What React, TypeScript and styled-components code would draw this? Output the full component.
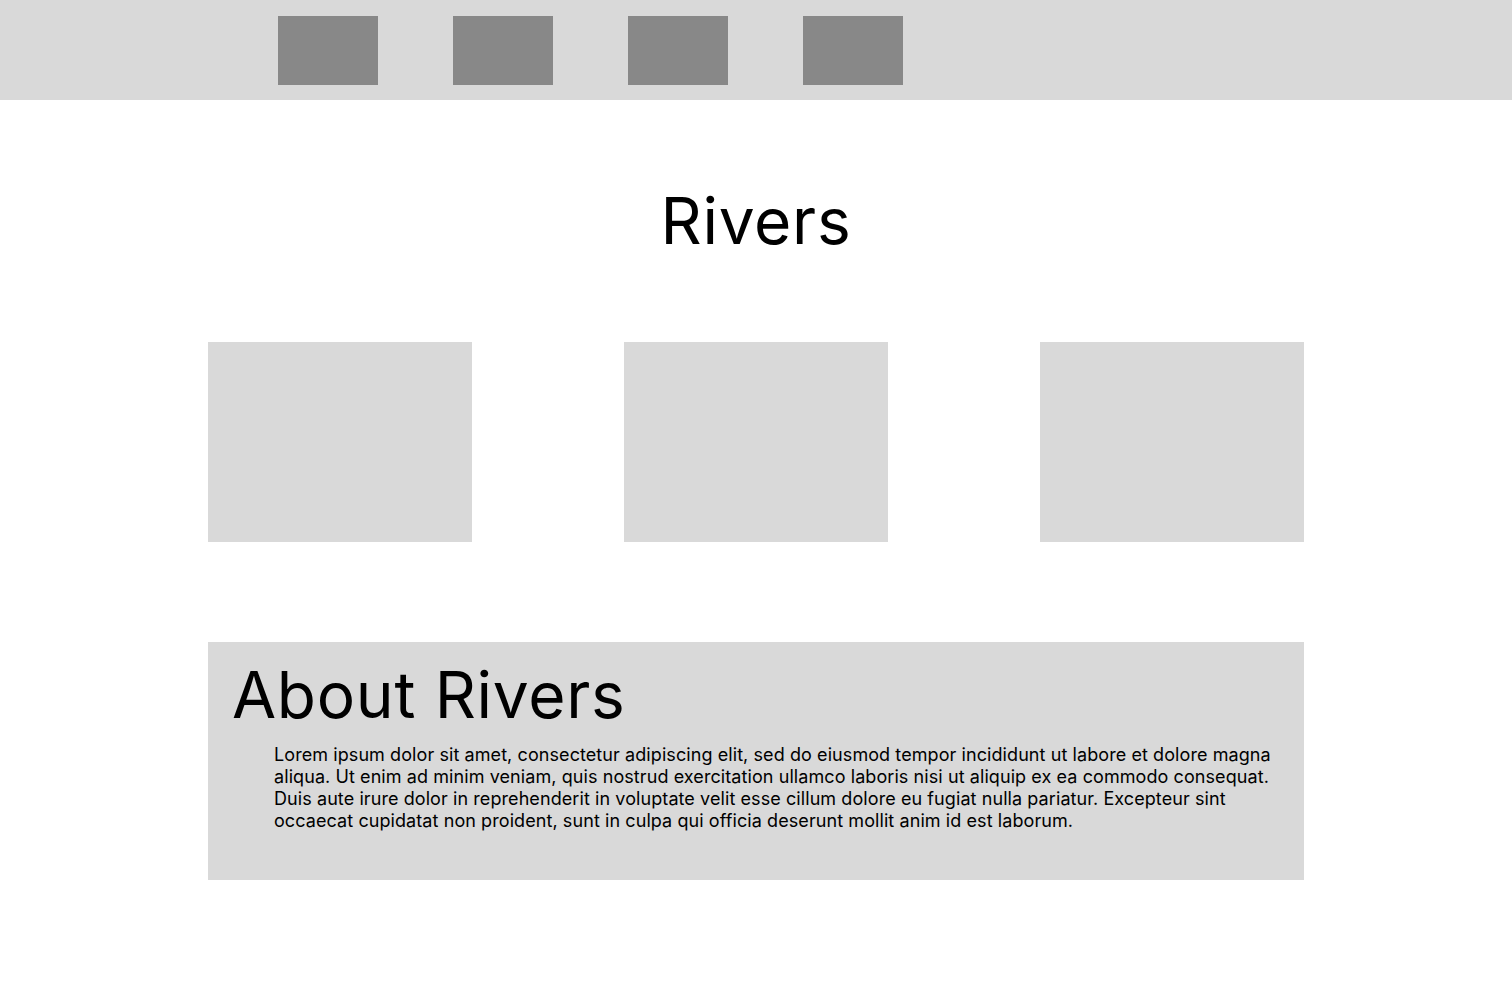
import React from "react";
import styled, { createGlobalStyle } from "styled-components";

const GlobalStyle = createGlobalStyle`
  html, body {
    margin: 0;
    padding: 0;
    background: #ffffff;
    font-family: Inter, "Noto Sans", Arial, sans-serif;
    color: #000000;
  }
`;

const Header = styled.header`
  height: 100px;
  background: #d9d9d9;
  display: flex;
  align-items: flex-start;
  padding: 16px 0 0 278px;
  box-sizing: border-box;
  gap: 75px;
`;

const NavItem = styled.div`
  width: 100px;
  height: 69px;
  background: #888888;
`;

const Main = styled.main`
  width: 1096px;
  margin: 0 auto;
  display: flex;
  flex-direction: column;
  align-items: stretch;
`;

const Title = styled.h1`
  margin: 82px 0 0;
  font-size: 64px;
  font-weight: 400;
  line-height: normal;
  letter-spacing: 0.011em;
  text-align: center;
`;

const Cards = styled.div`
  margin-top: 83px;
  display: flex;
  justify-content: space-between;
`;

const Card = styled.div`
  width: 264px;
  height: 200px;
  background: #d9d9d9;
`;

const About = styled.section`
  margin-top: 100px;
  height: 238px;
  box-sizing: border-box;
  background: #d9d9d9;
  padding: 14px 0 0 24px;
  display: flex;
  flex-direction: column;
`;

const AboutHeading = styled.h2`
  margin: 0;
  font-size: 64px;
  font-weight: 400;
  line-height: normal;
  letter-spacing: 0.011em;
`;

const AboutText = styled.p`
  margin: 11px 0 0 42px;
  width: 1020px;
  font-size: 18px;
  line-height: 22px;
  font-weight: 400;
  letter-spacing: 0.0045em;
`;

export default function App() {
  return (
    <>
      <GlobalStyle />
      <Header>
        <NavItem />
        <NavItem />
        <NavItem />
        <NavItem />
      </Header>
      <Main>
        <Title>Rivers</Title>
        <Cards>
          <Card />
          <Card />
          <Card />
        </Cards>
        <About>
          <AboutHeading>About Rivers</AboutHeading>
          <AboutText>
            Lorem ipsum dolor sit amet, consectetur adipiscing elit, sed do eiusmod tempor incididunt ut labore et dolore magna aliqua. Ut enim ad minim veniam, quis nostrud exercitation ullamco laboris nisi ut aliquip ex ea commodo consequat. Duis aute irure dolor in reprehenderit in voluptate velit esse cillum dolore eu fugiat nulla pariatur. Excepteur sint occaecat cupidatat non proident, sunt in culpa qui officia deserunt mollit anim id est laborum.
          </AboutText>
        </About>
      </Main>
    </>
  );
}
